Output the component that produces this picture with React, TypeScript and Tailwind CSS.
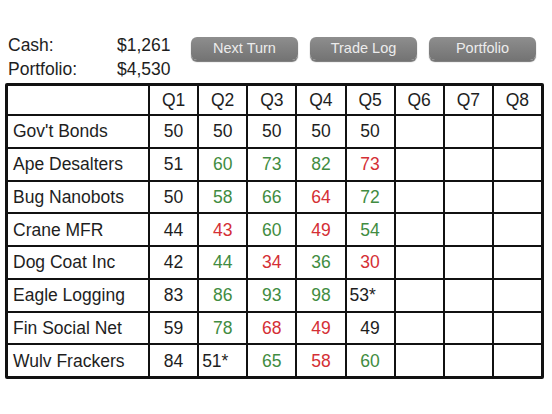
import React from 'react';

type Cell = { v: string; c?: 'g' | 'r'; left?: boolean };

const rows: { name: string; cells: Cell[] }[] = [
  { name: "Gov't Bonds", cells: [{ v: '50' }, { v: '50' }, { v: '50' }, { v: '50' }, { v: '50' }] },
  { name: 'Ape Desalters', cells: [{ v: '51' }, { v: '60', c: 'g' }, { v: '73', c: 'g' }, { v: '82', c: 'g' }, { v: '73', c: 'r' }] },
  { name: 'Bug Nanobots', cells: [{ v: '50' }, { v: '58', c: 'g' }, { v: '66', c: 'g' }, { v: '64', c: 'r' }, { v: '72', c: 'g' }] },
  { name: 'Crane MFR', cells: [{ v: '44' }, { v: '43', c: 'r' }, { v: '60', c: 'g' }, { v: '49', c: 'r' }, { v: '54', c: 'g' }] },
  { name: 'Dog Coat Inc', cells: [{ v: '42' }, { v: '44', c: 'g' }, { v: '34', c: 'r' }, { v: '36', c: 'g' }, { v: '30', c: 'r' }] },
  { name: 'Eagle Logging', cells: [{ v: '83' }, { v: '86', c: 'g' }, { v: '93', c: 'g' }, { v: '98', c: 'g' }, { v: '53*', left: true }] },
  { name: 'Fin Social Net', cells: [{ v: '59' }, { v: '78', c: 'g' }, { v: '68', c: 'r' }, { v: '49', c: 'r' }, { v: '49' }] },
  { name: 'Wulv Frackers', cells: [{ v: '84' }, { v: '51*', left: true }, { v: '65', c: 'g' }, { v: '58', c: 'r' }, { v: '60', c: 'g' }] },
];

const quarters = ['Q1', 'Q2', 'Q3', 'Q4', 'Q5', 'Q6', 'Q7', 'Q8'];

function GrayButton({ label }: { label: string }) {
  return (
    <button className="w-[107px] h-[23px] rounded-[6px] bg-gradient-to-b from-[#8e8e8e] to-[#747474] text-[#ececec] text-[14.5px] leading-[23px] shadow-[0_2px_1px_rgba(0,0,0,0.55)]">
      {label}
    </button>
  );
}

export default function App() {
  return (
    <div className="w-[552px] h-[414px] bg-white text-[#1e1e1e] font-['Liberation_Sans',Arial,sans-serif] overflow-hidden">
      <div className="flex pt-[33px] h-[83px]">
        <div className="pl-[8px] w-[191px] text-[17.5px] leading-[24px]">
          <div className="flex">
            <span className="w-[109px]">Cash:</span>
            <span>$1,261</span>
          </div>
          <div className="flex">
            <span className="w-[109px]">Portfolio:</span>
            <span>$4,530</span>
          </div>
        </div>
        <div className="flex gap-[12px] pt-[4px]">
          <GrayButton label="Next Turn" />
          <GrayButton label="Trade Log" />
          <GrayButton label="Portfolio" />
        </div>
      </div>

      <div className="ml-[5px] w-[539px] bg-[#111] p-[3px] grid grid-cols-[140px_repeat(8,1fr)] grid-rows-[28px_repeat(8,30.75px)] gap-[2px] text-[17.5px] rounded-[2px]">
        <div className="bg-white" />
        {quarters.map((q) => (
          <div key={q} className="bg-white flex items-center justify-center">
            {q}
          </div>
        ))}
        {rows.map((r) => (
          <React.Fragment key={r.name}>
            <div className="bg-white flex items-center pl-[5px]">{r.name}</div>
            {quarters.map((q, i) => {
              const cell = r.cells[i];
              const color = cell?.c === 'g' ? 'text-[#418c41]' : cell?.c === 'r' ? 'text-[#d42f35]' : '';
              return (
                <div
                  key={q}
                  className={`bg-white flex items-center ${cell?.left ? 'justify-start pl-[3px]' : 'justify-center'} ${color}`}
                >
                  {cell?.v}
                </div>
              );
            })}
          </React.Fragment>
        ))}
      </div>
    </div>
  );
}
